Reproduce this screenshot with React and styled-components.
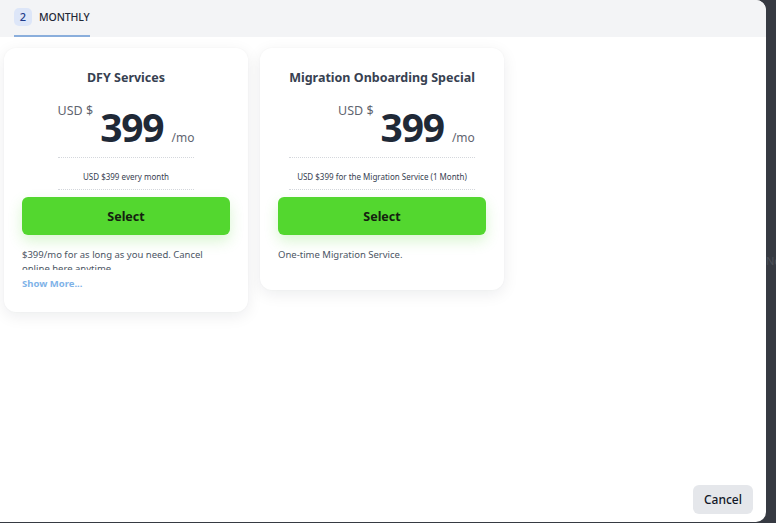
import styled, { createGlobalStyle } from "styled-components";

const GlobalStyle = createGlobalStyle`
  html, body {
    margin: 0;
    padding: 0;
    background: #363a42;
  }

  body {
    font-family: "Noto Sans", "Open Sans", sans-serif;
  }
`;

const Page = styled.div`
  display: flex;
  width: 776px;
  height: 523px;
  overflow: hidden;
`;

const Modal = styled.section`
  display: flex;
  flex-direction: column;
  width: 766px;
  height: 522px;
  background: #ffffff;
  border-radius: 0 10px 10px 0;
  overflow: hidden;
`;

const Backdrop = styled.div`
  flex: 1;
  padding-top: 253px;
  overflow: hidden;
  white-space: nowrap;
  font-size: 11px;
  color: #4c5058;
`;

const TabBar = styled.nav`
  display: flex;
  height: 37px;
  padding-left: 14px;
  background: #f3f4f6;
`;

const Tab = styled.div`
  display: flex;
  align-items: center;
  gap: 7px;
  box-sizing: border-box;
  height: 37px;
  padding-bottom: 2px;
  border-bottom: 2px solid #8aaedc;
`;

const Badge = styled.span`
  display: flex;
  align-items: center;
  justify-content: center;
  width: 18px;
  height: 18px;
  border-radius: 5px;
  background: #dde6f8;
  color: #1e3a8a;
  font-size: 11px;
  font-weight: 500;
`;

const TabLabel = styled.span`
  font-size: 10.5px;
  font-weight: 500;
  color: #1f2937;
  letter-spacing: -0.1px;
`;

const Body = styled.div`
  flex: 1;
  display: flex;
  align-items: flex-start;
  gap: 12px;
  padding: 11px 0 0 4px;
`;

const Card = styled.article`
  width: 244px;
  box-sizing: border-box;
  padding: 21px 18px ${(p) => (p.$extra ? "28px" : "21px")};
  border-radius: 12px;
  background: #ffffff;
  box-shadow: 0 4px 16px rgba(17, 24, 39, 0.08), 0 0 2px rgba(17, 24, 39, 0.04);
  display: flex;
  flex-direction: column;
`;

const PriceBlock = styled.div`
  align-self: center;
  display: flex;
  flex-direction: column;
`;

const Title = styled.h3`
  margin: 0;
  text-align: center;
  font-size: 12.5px;
  line-height: 18px;
  font-weight: 700;
  color: #374151;
  white-space: nowrap;
`;

const PriceRow = styled.div`
  display: flex;
  justify-content: flex-end;
  align-items: flex-start;
  margin-top: 9px;
  height: 59px;
`;

const Currency = styled.span`
  font-size: 12.5px;
  line-height: 16px;
  color: #5f6570;
  margin-top: 7px;
`;

const Amount = styled.span`
  font-size: 39px;
  line-height: 48px;
  font-weight: 700;
  letter-spacing: -1.2px;
  color: #1f2937;
  margin-left: 7px;
  margin-top: 7px;
`;

const Period = styled.span`
  font-size: 12px;
  line-height: 16px;
  color: #5f6570;
  margin-left: 8px;
  margin-top: 34px;
`;

const Note = styled.div`
  margin-top: 2px;
  border-top: 1px dotted #d4d7dc;
  border-bottom: 1px dotted #d4d7dc;
  padding: 13px 0 6px;
  text-align: center;
  font-size: 8px;
  line-height: 12px;
  color: #374151;
  white-space: nowrap;
`;

const SelectButton = styled.button`
  margin-top: 7px;
  height: 38px;
  border: none;
  border-radius: 6px;
  background: #53d72f;
  box-shadow: 0 6px 14px rgba(83, 215, 47, 0.22);
  font-family: inherit;
  font-size: 12.5px;
  font-weight: 700;
  color: #14210f;
  cursor: pointer;
`;

const Description = styled.p`
  margin: 13px 0 0;
  max-height: 22px;
  overflow: hidden;
  font-size: 9.5px;
  line-height: 14px;
  color: #4b5563;
`;

const ShowMore = styled.a`
  margin-top: 7px;
  font-size: 9.5px;
  line-height: 14px;
  font-weight: 700;
  color: #7fb3e8;
  cursor: pointer;
`;

const Footer = styled.footer`
  display: flex;
  justify-content: flex-end;
  padding: 0 13px 8px;
`;

const CancelButton = styled.button`
  height: 29px;
  padding: 0 11px;
  border: none;
  border-radius: 6px;
  background: #e5e7eb;
  font-family: inherit;
  font-size: 12px;
  font-weight: 500;
  color: #111827;
  cursor: pointer;
`;

const plans = [
  {
    title: "DFY Services",
    price: "399",
    note: "USD $399 every month",
    description: "$399/mo for as long as you need. Cancel online here anytime",
    showMore: true,
  },
  {
    title: "Migration Onboarding Special",
    price: "399",
    note: "USD $399 for the Migration Service (1 Month)",
    description: "One-time Migration Service.",
    showMore: false,
  },
];

const App = () => {
  return (
    <>
      <GlobalStyle />
      <Page>
        <Modal>
          <TabBar>
            <Tab>
              <Badge>2</Badge>
              <TabLabel>MONTHLY</TabLabel>
            </Tab>
          </TabBar>

          <Body>
            {plans.map((plan) => (
              <Card key={plan.title} $extra={!plan.showMore}>
                <PriceBlock>
                  <Title>{plan.title}</Title>
                  <PriceRow>
                    <Currency>USD $</Currency>
                    <Amount>{plan.price}</Amount>
                    <Period>/mo</Period>
                  </PriceRow>
                  <Note>{plan.note}</Note>
                </PriceBlock>
                <SelectButton>Select</SelectButton>
                <Description>{plan.description}</Description>
                {plan.showMore && <ShowMore>Show More...</ShowMore>}
              </Card>
            ))}
          </Body>

          <Footer>
            <CancelButton>Cancel</CancelButton>
          </Footer>
        </Modal>
        <Backdrop>No</Backdrop>
      </Page>
    </>
  );
};

export default App;
